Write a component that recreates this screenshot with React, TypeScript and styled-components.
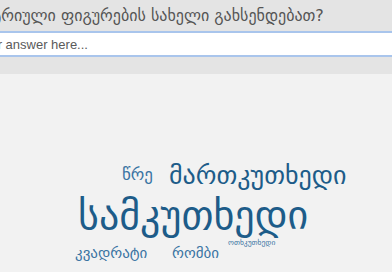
import React from "react";
import styled, { createGlobalStyle } from "styled-components";

const GlobalStyle = createGlobalStyle`
  html, body {
    margin: 0;
    padding: 0;
    background: #f2f2f2;
    overflow: hidden;
  }
`;

const Page = styled.div`
  width: 392px;
  height: 272px;
  display: flex;
  flex-direction: column;
  overflow: hidden;
  font-family: "DejaVu Sans", "Liberation Sans", sans-serif;
`;

const Header = styled.div`
  height: 74px;
  background: #e4e4e4;
  display: flex;
  flex-direction: column;
  align-items: flex-start;
  overflow: hidden;
`;

const Question = styled.div`
  margin: 6px 0 0 -128px;
  white-space: nowrap;
  font-size: 16px;
  line-height: 20px;
  color: #555555;
`;

const AnswerInput = styled.input`
  display: block;
  margin: 5px 0 0 -59px;
  width: 480px;
  height: 26px;
  box-sizing: border-box;
  border: 1px solid #a9c5ec;
  border-width: 2px 1px;
  background: #ffffff;
  padding: 0;
  font-family: "Liberation Sans", Arial, sans-serif;
  font-size: 13px;
  color: #333;
  outline: none;

  &::placeholder {
    color: #5a5a5a;
  }
`;

const Cloud = styled.div`
  position: relative;
  flex: 1;
`;

// word cloud: each word's place is the content itself
const Word = styled.span<{ $x: number; $y: number; $size: number; $color?: string }>`
  position: absolute;
  left: ${(p) => p.$x}px;
  top: ${(p) => p.$y}px;
  font-size: ${(p) => p.$size}px;
  line-height: 1;
  white-space: nowrap;
  color: ${(p) => p.$color ?? "#1d5c89"};
`;

const words = [
  { text: "წრე", x: 122, y: 92, size: 17, color: "#3a74a3" },
  { text: "მართკუთხედი", x: 169, y: 88, size: 26 },
  { text: "სამკუთხედი", x: 78, y: 121, size: 40 },
  { text: "ოთხკუთხედი", x: 228, y: 165, size: 7.5, color: "#3a74a3" },
  { text: "კვადრატი", x: 75, y: 172, size: 15, color: "#3a74a3" },
  { text: "რომბი", x: 172, y: 172, size: 15, color: "#3a74a3" },
];

export default function App() {
  return (
    <>
      <GlobalStyle />
      <Page>
        <Header>
          <Question>რომელი გეომეტრიული ფიგურების სახელი გახსენდებათ?</Question>
          <AnswerInput placeholder="Enter your answer here..." />
        </Header>
        <Cloud>
          {words.map((w) => (
            <Word key={w.text} $x={w.x} $y={w.y} $size={w.size} $color={w.color}>
              {w.text}
            </Word>
          ))}
        </Cloud>
      </Page>
    </>
  );
}
